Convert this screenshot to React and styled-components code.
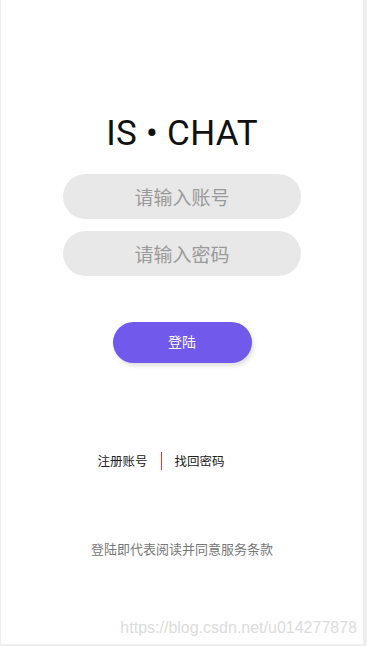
import React from "react";
import styled, { createGlobalStyle } from "styled-components";

const Global = createGlobalStyle`
  html, body { margin: 0; padding: 0; background: #efefef; }
  body { font-family: Roboto, "Noto Sans CJK SC", sans-serif; }
  * { box-sizing: border-box; }
`;

const Page = styled.div`
  width: 367px;
  height: 646px;
  background: #efefef;
  position: relative;
  overflow: hidden;
`;

const Screen = styled.main`
  margin-left: 1px;
  width: 362px;
  height: 644px;
  background: #ffffff;
  display: flex;
  flex-direction: column;
  align-items: center;
  padding-top: 114px;
`;

const Title = styled.h1`
  margin: 0 0 20px;
  font-family: Roboto, sans-serif;
  font-weight: 400;
  font-size: 35px;
  line-height: 40px;
  color: #111;
  letter-spacing: 0.3px;
`;

const Field = styled.input`
  width: 238px;
  height: 45px;
  border: none;
  outline: none;
  border-radius: 23px;
  background: #e8e8e8;
  text-align: center;
  font-family: "Noto Sans CJK SC", sans-serif;
  font-size: 19px;
  color: #333;
  margin-top: ${(p) => p.$gap || 0}px;
  &::placeholder { color: #9a9a9a; }
`;

const LoginButton = styled.button`
  margin-top: 46px;
  width: 139px;
  height: 41px;
  padding: 0 0 3px;
  border: none;
  border-radius: 21px;
  background: #7159ec;
  color: #fff;
  font-family: "Noto Sans CJK SC", sans-serif;
  font-size: 14px;
  box-shadow: 2px 3px 4px rgba(0, 0, 0, 0.12);
  cursor: pointer;
`;

const Links = styled.nav`
  margin: 89px 42px 0 0;
  display: flex;
  align-items: center;
  height: 18px;
  font-family: "Noto Sans CJK SC", sans-serif;
  font-size: 12.5px;
  color: #222;
`;

const LinkText = styled.span`
  line-height: 18px;
`;

const Divider = styled.span`
  width: 1px;
  height: 18px;
  background: #e53935;
  margin: 0 13px;
`;

const Terms = styled.p`
  margin: 70px 0 0;
  font-family: "Noto Sans CJK SC", sans-serif;
  font-size: 13px;
  line-height: 18px;
  color: #777;
`;

const Watermark = styled.span`
  position: absolute;
  right: 10px;
  top: 618px;
  font-family: "Liberation Sans", Arial, sans-serif;
  font-size: 16px;
  line-height: 20px;
  color: #dcdcdc;
`;

export default function App() {
  return (
    <>
      <Global />
      <Page>
        <Screen>
          <Title>IS • CHAT</Title>
          <Field placeholder="请输入账号" />
          <Field $gap={12} type="password" placeholder="请输入密码" />
          <LoginButton>登陆</LoginButton>
          <Links>
            <LinkText>注册账号</LinkText>
            <Divider />
            <LinkText>找回密码</LinkText>
          </Links>
          <Terms>登陆即代表阅读并同意服务条款</Terms>
        </Screen>
        <Watermark>https://blog.csdn.net/u014277878</Watermark>
      </Page>
    </>
  );
}
